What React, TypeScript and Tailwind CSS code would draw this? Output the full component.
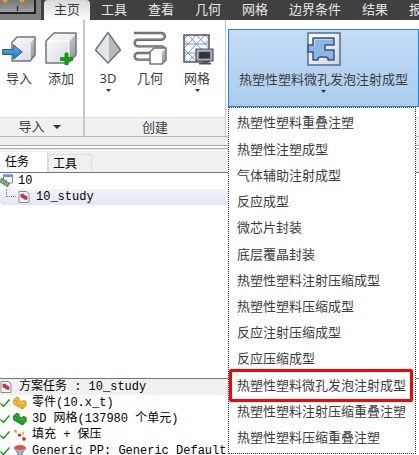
import React from 'react';

interface RibbonButtonProps {
  label: string;
  icon: React.ReactNode;
  hasMenu?: boolean;
  wide?: boolean;
}

const ribbonTabs = ['工具', '查看', '几何', '网格', '边界条件', '结果', '报'];

const processes = [
  '热塑性塑料重叠注塑',
  '热塑性注塑成型',
  '气体辅助注射成型',
  '反应成型',
  '微芯片封装',
  '底层覆晶封装',
  '热塑性塑料注射压缩成型',
  '热塑性塑料压缩成型',
  '反应注射压缩成型',
  '反应压缩成型',
  '热塑性塑料微孔发泡注射成型',
  '热塑性塑料注射压缩重叠注塑',
  '热塑性塑料压缩重叠注塑',
];

const highlighted = '热塑性塑料微孔发泡注射成型';

const Caret: React.FC = () => (
  <svg className="w-[5px] h-[3px]" viewBox="0 0 5 3">
    <path d="M0 0h5L2.5 3z" fill="#333" />
  </svg>
);

// Shared fills for the ribbon icons
const Gradients: React.FC = () => (
  <svg className="absolute w-0 h-0" aria-hidden="true">
    <defs>
      <linearGradient id="face" x1="0" y1="0" x2="1" y2="1">
        <stop offset="0" stopColor="#ffffff" />
        <stop offset="1" stopColor="#d3d6da" />
      </linearGradient>
      <linearGradient id="side" x1="0" y1="0" x2="0" y2="1">
        <stop offset="0" stopColor="#c3c7cc" />
        <stop offset="1" stopColor="#8d949c" />
      </linearGradient>
      <linearGradient id="blue" x1="0" y1="0" x2="0" y2="1">
        <stop offset="0" stopColor="#63b7f5" />
        <stop offset="1" stopColor="#1672c4" />
      </linearGradient>
    </defs>
  </svg>
);

const ImportIcon: React.FC = () => (
  <svg className="w-[34px] h-[34px]" viewBox="0 0 34 34">
    <path d="M10 11.5l5-5.5h18v18l-5 6H10z" fill="url(#face)" />
    <path d="M28 11.5l5-5.5v18l-5 6z" fill="url(#side)" />
    <path d="M10 11.5h18V30M28 11.5l5-5.5" fill="none" stroke="#fff" />
    <path d="M10 11.5l5-5.5h18v18l-5 6H10z" fill="none" stroke="#70767e" strokeWidth="1.5" strokeLinejoin="round" />
    <path d="M.7 18.5h11v-4.5l8.5 7-8.5 7v-4.5h-11z" fill="url(#blue)" stroke="#1c5c9c" strokeLinejoin="round" />
  </svg>
);

const AddIcon: React.FC = () => (
  <svg className="w-[34px] h-[34px]" viewBox="0 0 34 34">
    <path d="M2 10l8-8h22v22l-8 8H2z" fill="url(#face)" />
    <path d="M25 10l7-8v22l-7 8z" fill="url(#side)" />
    <path d="M2 10h23v22M25 10l7-8" fill="none" stroke="#fff" />
    <path d="M2 10l8-8h22v22l-8 8H2z" fill="none" stroke="#70767e" strokeWidth="1.5" strokeLinejoin="round" />
    <path d="M21 22h3v4.5h4.500v3H24V34h-3v-4.500h-4.500v-3H21z" fill="#12a312" stroke="#0a8a0a" strokeWidth=".8" />
  </svg>
);

const DiamondIcon: React.FC = () => (
  <svg className="w-[34px] h-[34px]" viewBox="0 0 34 34">
    <path d="M17 1.500L4.500 19 17 32z" fill="#e2e5e8" />
    <path d="M17 1.500L29.500 19 17 32z" fill="#b4b9bf" />
    <path d="M17 3v28" stroke="#fafafa" />
    <path d="M17 1.500L4.500 19 17 32l12.500-13z" fill="none" stroke="#70767e" strokeWidth="1.5" strokeLinejoin="round" />
  </svg>
);

const snake = 'M1 2h27.5a3.300 3.300 0 0 1 0 6.700H5a3.300 3.300 0 0 0 0 6.700h23.500a3.300 3.300 0 0 1 0 6.600H5a3.300 3.300 0 0 0 0 6.600h13';

const GeometryIcon: React.FC = () => (
  <svg className="w-[34px] h-[34px]" viewBox="0 0 34 34">
    <path d={snake} fill="none" stroke="#5d6269" strokeWidth="2.4" />
    <path d={snake} fill="none" stroke="#9a9fa5" strokeWidth=".7" />
    <path d="M17 21l4-4h12v12l-4 4H17z" fill="#fff" />
    <path d="M29 21l4-4v12l-4 4z" fill="url(#side)" />
    <path d="M17 21l4-4h12v12l-4 4H17z" fill="none" stroke="#70767e" strokeWidth="1.5" strokeLinejoin="round" />
  </svg>
);

const MeshIcon: React.FC = () => (
  <svg className="w-[34px] h-[34px]" viewBox="0 0 34 34">
    <path d="M4 4h25v27H4z" fill="#fff" />
    <path
      d="M4 13h25M4 22h25M4 8.500L8 4l8.500 9L25 4l4 4.500M4 17.500L8 13l8.500-9L25 13l4 4.500M4 17.500L8 22l8.500-9 8.500 9 4-4.500M4 8.500L8 13M25 13l4-4.500M8 22l8.500 9M4 26.500L8 22M4 26.500L8 31l8.500-9"
      fill="none"
      stroke="#7395d2"
    />
    <path d="M4 4h25v27H4z" fill="none" stroke="#4d5663" strokeWidth="1.5" />
    <path d="M16 18h17v12H16z" fill="#aaafb6" stroke="#4a5058" strokeWidth="1.2" />
    <path d="M19 21h11v6.500H19z" fill="#2c3440" stroke="#555" strokeWidth=".6" />
    <path d="M22 30h6v2h3v1.500H19V32h3z" fill="#50565e" />
  </svg>
);

const MoldIcon: React.FC = () => (
  <svg className="w-[34px] h-[34px]" viewBox="0 0 34 34">
    <path d="M1 1h32v32H1z" fill="url(#face)" stroke="#4f6f96" strokeWidth="1.5" />
    <path
      d="M1 13h5V6h21v7h-9v5h9v10h-6v-2l-2-1h-6l-2 1v2H6v-8H1z"
      fill="#8fb5e2"
      stroke="#33548a"
      strokeWidth="1.5"
      strokeLinejoin="round"
    />
    <path d="M7.500 14V7.500h18" fill="none" stroke="#bcd5f0" />
  </svg>
);

const StudyIcon: React.FC = () => (
  <svg className="w-3 h-3 shrink-0" viewBox="0 0 12 12">
    <path d="M1 .5h7.500l2.500 2.500v8.500H1z" fill="#fff" stroke="#8b8b8b" />
    <path d="M2.500 3l3-.5 1 1.500 3 1.500v3L7.500 9 5 7.500 2.500 6z" fill="#d02b4b" />
  </svg>
);

const ProjectIcon: React.FC = () => (
  <svg className="w-[14px] h-[14px] shrink-0" viewBox="0 0 14 14">
    <path d="M3.500 1h9v8h-9z" fill="#fff" stroke="#7a8fd0" />
    <path d="M3 .5h10v2.500H3z" fill="#5b97e8" />
    <path d="M0 5.500l9 6" stroke="#8a8a8a" strokeWidth="5" />
    <path d="M0 5.500l9 6" stroke="#5fe04f" strokeWidth="2" />
    <path d="M1 8l3-4M4 10l3-4M7 12l2-3" stroke="#555" strokeWidth=".7" />
  </svg>
);

const Check: React.FC = () => (
  <svg className="w-[10px] h-[10px] shrink-0" viewBox="0 0 10 10">
    <path d="M.5 5.500L3.500 8.500 9.500 1.500" fill="none" stroke="#159a1c" strokeWidth="1.5" />
  </svg>
);

const PartIcon: React.FC<{ fill: string; edge: string }> = ({ fill, edge }) => (
  <svg className="w-[14px] h-[14px] shrink-0" viewBox="0 0 14 14">
    <path d="M.7 4l2.300-2.500 3 .5v3l2.500 1L10 4.500l3 .8v4.200L9.500 13 .7 8z" fill={fill} stroke={edge} strokeLinejoin="round" />
    <path d="M.7 4l3.300 1v3l5.500 2L13 6.500M9.500 10v3" fill="none" stroke={edge} strokeWidth=".7" />
  </svg>
);

const FillIcon: React.FC = () => (
  <svg className="w-[14px] h-[14px] shrink-0" viewBox="0 0 14 14">
    <path d="M2 3l8 8M10 4v6" stroke="#999" strokeDasharray="1 1" />
    <circle cx="2.5" cy="3" r="1.6" fill="#d9a84a" />
    <circle cx="6.5" cy="7" r="1.6" fill="#d22" />
    <circle cx="10" cy="5" r="1.4" fill="#e8c23a" />
    <circle cx="11" cy="11" r="1.8" fill="#d22" />
  </svg>
);

const MaterialIcon: React.FC = () => (
  <svg className="w-[14px] h-[14px] shrink-0" viewBox="0 0 14 14">
    <path d="M1 4h12L9 9v4H5V9z" fill="#9db4d6" stroke="#6d7f9c" />
    <ellipse cx="7" cy="3.5" rx="5.5" ry="2.5" fill="#e0502c" stroke="#aaa" strokeWidth=".6" />
  </svg>
);

const RibbonButton: React.FC<RibbonButtonProps> = ({ label, icon, hasMenu, wide }) => (
  <button className={`flex flex-col items-center shrink-0 ${wide ? 'w-12' : 'w-[38px]'}`}>
    {icon}
    <span className="mt-[5px] leading-4 whitespace-nowrap">{label}</span>
    {hasMenu && <span className="mt-[3px] flex"><Caret /></span>}
  </button>
);

const tasks = [
  { label: '零件(10.x_t)', icon: <PartIcon fill="#f8bf3a" edge="#cf9216" /> },
  { label: '3D 网格(137980 个单元)', icon: <PartIcon fill="#2fae35" edge="#14781b" /> },
  { label: '填充 + 保压', icon: <FillIcon /> },
  { label: 'Generic PP: Generic Default', icon: <MaterialIcon /> },
];

const App: React.FC = () => {
  return (
    <div className="flex flex-col min-h-screen overflow-hidden bg-white text-[13px] text-[#3c3c3c] font-['Noto_Sans','Noto_Sans_CJK_SC',sans-serif]">
      <Gradients />

      {/* Ribbon tabs */}
      <nav className="flex h-5 shrink-0 bg-[#404040] text-[#e6e6e6] whitespace-nowrap">
        <div className="w-[41px] mr-[3px] shrink-0 bg-[#808080]">
          <button aria-label="菜单" className="block w-9 h-[14px] border-r-2 border-b-2 border-[#222] bg-linear-to-b from-[#777] to-[#a0a0a0]">
            <svg className="w-[34px] h-3" viewBox="0 0 34 12">
              <circle cx="5" cy="0" r="2.5" fill="#f39a1c" />
              <circle cx="22" cy="0" r="2.5" fill="#f39a1c" />
              <path d="M17.500 6v5" stroke="#333" strokeWidth="1.5" />
            </svg>
          </button>
        </div>
        <button className="w-[46px] h-full shrink-0 rounded-t-sm bg-linear-to-b from-[#d8d8d8] to-white text-[#3c3c3c]">主页</button>
        <div className="flex gap-[21px] pl-[11px]">
          {ribbonTabs.map((tab) => (
            <button key={tab} className="shrink-0">{tab}</button>
          ))}
        </div>
      </nav>

      {/* Ribbon */}
      <div className="flex shrink-0 h-[117px] border-b border-[#b5b5b5]">
        <section className="flex flex-col w-[85px] shrink-0 border-r-2 border-[#c6c6c6]">
          <div className="flex flex-1 gap-1 pt-[11px]">
            <RibbonButton label="导入" icon={<ImportIcon />} />
            <RibbonButton label="添加" icon={<AddIcon />} />
          </div>
          <button className="flex items-center justify-center gap-2 h-[19px] pr-1 border-t border-[#ddd] bg-[#f0f0f0]">
            导入
            <svg className="w-2 h-1" viewBox="0 0 8 4">
              <path d="M0 0h8L4 4z" fill="#333" />
            </svg>
          </button>
        </section>

        <section className="flex flex-col w-[141px] shrink-0 border-r border-[#c6c6c6]">
          <div className="flex flex-1 gap-1 pt-[11px] px-1">
            <RibbonButton label="3D" icon={<DiamondIcon />} hasMenu />
            <RibbonButton label="几何" icon={<GeometryIcon />} />
            <RibbonButton label="网格" icon={<MeshIcon />} hasMenu wide />
          </div>
          <div className="h-[19px] border-t border-[#ddd] bg-[#f0f0f0] text-center leading-[18px]">创建</div>
        </section>

        <section className="relative flex flex-col flex-1 pt-[9px] pl-[2px]">
          <button
            aria-expanded="true"
            className="flex flex-col items-center h-[78px] pt-[2px] border border-[#2a7fd4] bg-linear-to-b from-[#c4dcf4] to-[#a9cdee]"
          >
            <MoldIcon />
            <span className="mt-[5px] leading-4 whitespace-nowrap">热塑性塑料微孔发泡注射成型</span>
            <span className="mt-[3px] flex"><Caret /></span>
          </button>
          <div className="mt-auto h-[19px] border-t border-[#ddd] bg-[#f0f0f0]" />

          {/* Process menu */}
          <ul className="absolute z-10 top-[87px] left-[2px] right-[3px] h-[347px] py-[2px] flex flex-col border border-dotted border-[#333] bg-white">
            {processes.map((name) => (
              <li key={name} className="relative flex flex-1">
                <button className="flex-1 pl-2 text-left whitespace-nowrap">{name}</button>
                {name === highlighted && (
                  <span className="absolute -inset-y-[3px] left-0 right-[2px] rounded-[2px] border-3 border-[#ff0000] pointer-events-none" />
                )}
              </li>
            ))}
          </ul>
        </section>
      </div>

      <div className="shrink-0 h-[15px] bg-[#f0f0f0] flex flex-col justify-end pb-[3px]">
        <div className="h-1 border-y border-[#aaa] bg-white" />
      </div>

      {/* Panel tabs */}
      <div className="flex items-end shrink-0 h-[21px] bg-[#f0f0f0] border-b border-[#777] text-[12px] text-black">
        <button className="w-12 h-5 pl-[5px] text-left bg-white border-r border-[#ddd]">任务</button>
        <button className="w-11 h-[18px] pl-1 text-left border border-b-0 border-[#ddd]">工具</button>
      </div>

      {/* Project tree */}
      <div className="flex-1 text-[12px] text-black font-['Liberation_Mono','Noto_Sans_CJK_SC',monospace]">
        <div className="flex items-center gap-1 h-4">
          <ProjectIcon />
          10
        </div>
        <div className="flex items-center w-[228px] h-4 pl-1 rounded-l-sm bg-linear-to-b from-[#f2f5f9] to-[#e1e8f1]">
          <span className="w-[10px] h-2 ml-[2px] mb-2 border-l border-b border-dotted border-[#888]" />
          <span className="ml-[2px] mr-[6px]"><StudyIcon /></span>
          10_study
        </div>
      </div>

      {/* Study tasks */}
      <div className="shrink-0 h-[77px] overflow-hidden border-t border-[#777] text-[12px] text-black font-['Liberation_Mono','Noto_Sans_CJK_SC',monospace]">
        <div className="flex items-center w-[228px] h-4 gap-[7px] bg-[#f0f0f0]">
          <StudyIcon />
          方案任务 : 10_study
        </div>
        {tasks.map((task) => (
          <div key={task.label} className="flex items-center h-4 whitespace-nowrap">
            <Check />
            <span className="ml-[3px] mr-[5px]">{task.icon}</span>
            {task.label}
          </div>
        ))}
      </div>
    </div>
  );
};

export default App;
